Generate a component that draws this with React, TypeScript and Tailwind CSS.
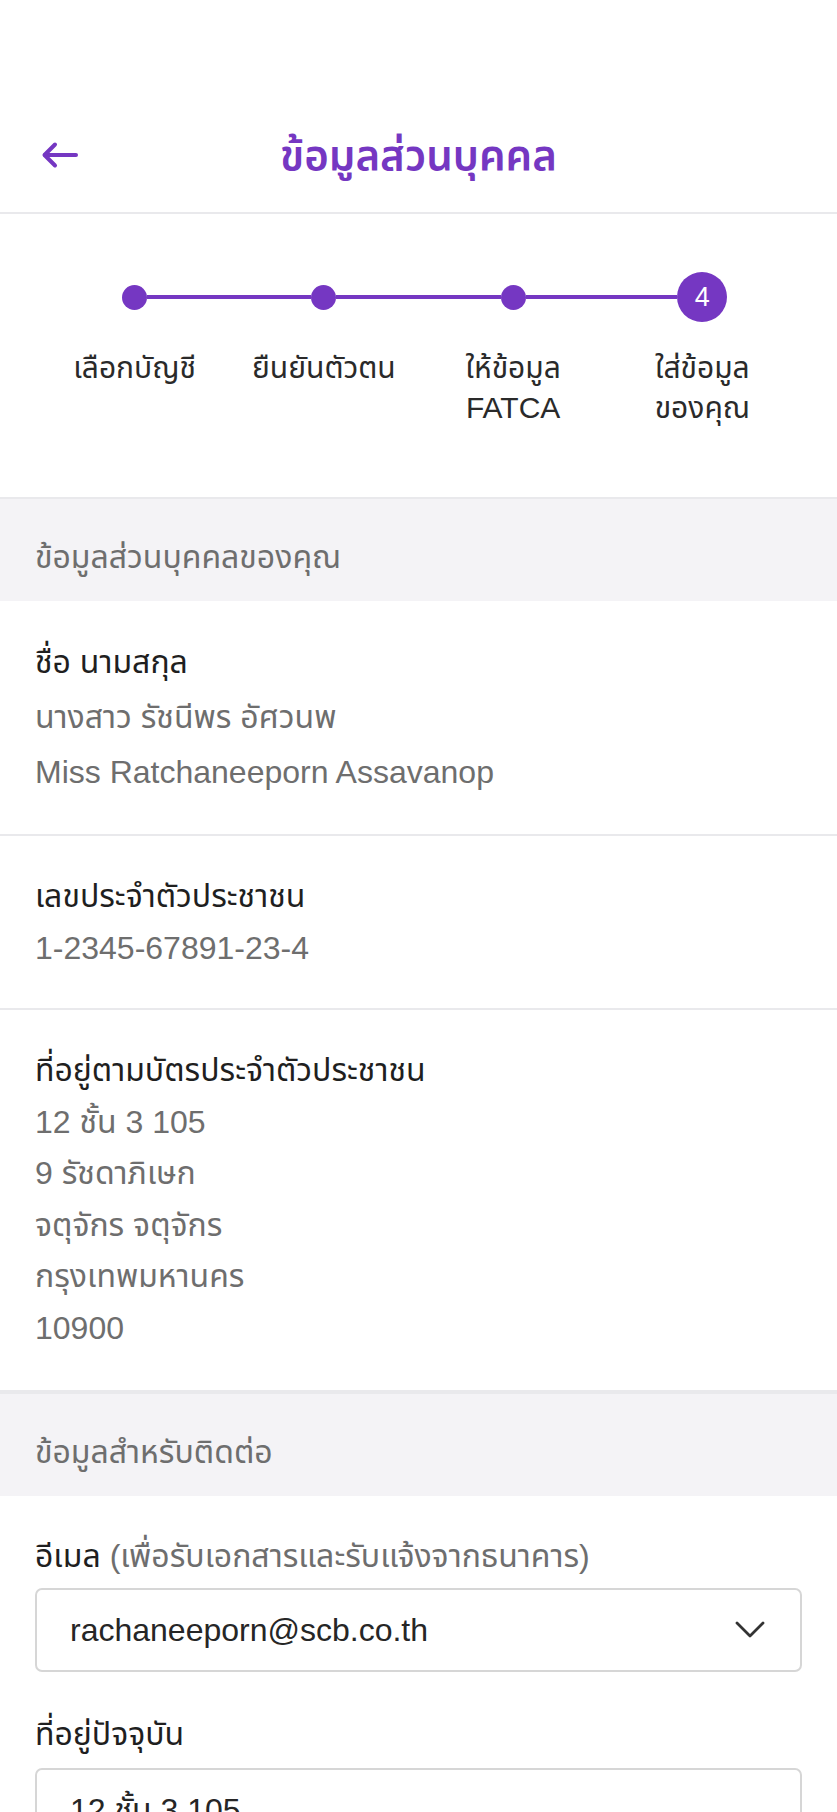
import * as React from 'react'

const purple = 'text-[#7537c2]'

const steps = [
  { label: ['เลือกบัญชี'] },
  { label: ['ยืนยันตัวตน'] },
  { label: ['ให้ข้อมูล', 'FATCA'] },
  { label: ['ใส่ข้อมูล', 'ของคุณ'] },
]

function BackArrow() {
  return (
    <svg width="38" height="28" viewBox="0 0 38 28" fill="none" stroke="#7537c2" strokeWidth="4" strokeLinecap="round" strokeLinejoin="round">
      <path d="M35 14H4" />
      <path d="M14 3.5L3.5 14L14 24.5" />
    </svg>
  )
}

function Chevron() {
  return (
    <svg width="30" height="18" viewBox="0 0 30 18" fill="none" stroke="#333" strokeWidth="2.8" strokeLinecap="round" strokeLinejoin="round">
      <path d="M2 2L15 15L28 2" />
    </svg>
  )
}

function Stepper() {
  return (
    <div className="grid grid-cols-4 mx-[40px]">
      {steps.map((s, i) => {
        const last = i === steps.length - 1
        return (
          <div key={i} className="flex flex-col items-center">
            <div className="flex items-center w-full h-[50px]">
              <div className={`flex-1 h-[4px] ${i === 0 ? 'bg-transparent' : 'bg-[#7537c2]'}`} />
              {last ? (
                <div className="w-[50px] h-[50px] rounded-full bg-[#7537c2] flex items-center justify-center text-white text-[27px]">
                  4
                </div>
              ) : (
                <div className="w-[25px] h-[25px] rounded-full bg-[#7537c2]" />
              )}
              <div className={`flex-1 h-[4px] ${last ? 'bg-transparent' : 'bg-[#7537c2]'}`} />
            </div>
            <div className="mt-[26px] text-center text-[30px] leading-[40px] text-[#2a2a2a] whitespace-nowrap">
              {s.label.map((l) => (
                <div key={l}>{l}</div>
              ))}
            </div>
          </div>
        )
      })}
    </div>
  )
}

function SectionHeader({ children }: { children: React.ReactNode }) {
  return (
    <div className="h-[104px] border-t-2 border-[#e9e9ec] bg-[#f4f3f6] flex items-center px-[35px] pt-[14px] text-[32px] text-[#6e6e6e]">
      {children}
    </div>
  )
}

function InfoItem({ label, lines, className }: { label: string; lines: string[]; className: string }) {
  return (
    <div className={`px-[35px] border-b-2 border-[#e9e9ec] text-[32px] ${className}`}>
      <div className="text-[#1f1f1f]">{label}</div>
      {lines.map((l) => (
        <div key={l} className="text-[#6e6e6e]">{l}</div>
      ))}
    </div>
  )
}

export default function App() {
  return (
    <div
      className="w-[837px] h-[1812px] overflow-hidden bg-white"
      style={{ fontFamily: '"Liberation Sans", "Noto Sans Thai", "Noto Sans", sans-serif' }}
    >
      {/* header */}
      <div className="h-[214px] border-b-2 border-[#e9e9ec] flex flex-col justify-end">
        <div className="grid grid-cols-[1fr_auto_1fr] items-center h-[110px] mb-[2px]">
          <div className="pl-[41px]">
            <BackArrow />
          </div>
          <h1 className={`text-[42px] font-semibold ${purple}`}>ข้อมูลส่วนบุคคล</h1>
          <div />
        </div>
      </div>

      {/* stepper */}
      <div className="pt-[58px] pb-[69px]">
        <Stepper />
      </div>

      <SectionHeader>ข้อมูลส่วนบุคคลของคุณ</SectionHeader>
      <InfoItem
        className="py-[34px] leading-[55px]"
        label="ชื่อ นามสกุล"
        lines={['นางสาว รัชนีพร อัศวนพ', 'Miss Ratchaneeporn Assavanop']}
      />
      <InfoItem className="py-[34px] leading-[52px]" label="เลขประจำตัวประชาชน" lines={['1-2345-67891-23-4']} />
      <InfoItem
        className="py-[35px] leading-[51.6px]"
        label="ที่อยู่ตามบัตรประจำตัวประชาชน"
        lines={['12 ชั้น 3 105', '9 รัชดาภิเษก', 'จตุจักร จตุจักร', 'กรุงเทพมหานคร', '10900']}
      />

      <SectionHeader>ข้อมูลสำหรับติดต่อ</SectionHeader>
      <div className="px-[35px] pt-[34px] text-[32px] leading-[52px]">
        <div className="text-[#1f1f1f]">
          อีเมล <span className="text-[#6e6e6e]">(เพื่อรับเอกสารและรับแจ้งจากธนาคาร)</span>
        </div>
        <div className="mt-[6px] h-[84px] rounded-[7px] border-2 border-[#d6d6d6] flex items-center justify-between pl-[33px] pr-[35px]">
          <span className="text-[#262626]">rachaneeporn@scb.co.th</span>
          <Chevron />
        </div>
        <div className="mt-[36px] text-[#1f1f1f]">ที่อยู่ปัจจุบัน</div>
        <div className="mt-[8px] h-[84px] rounded-[7px] border-2 border-[#d6d6d6] flex items-center pl-[33px] pr-[35px]">
          <span className="text-[#262626]">12 ชั้น 3 105</span>
        </div>
      </div>
    </div>
  )
}
